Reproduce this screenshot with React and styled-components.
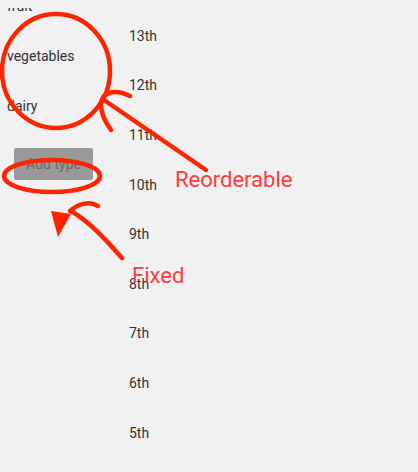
import React from "react";
import styled, { createGlobalStyle } from "styled-components";

const GlobalStyle = createGlobalStyle`
  html, body {
    margin: 0;
    padding: 0;
    background: #f1f1f1;
    overflow: hidden;
  }
  body {
    font-family: Roboto, "Liberation Sans", sans-serif;
  }
`;

const Page = styled.div`
  position: relative;
  width: 418px;
  height: 472px;
  overflow: hidden;
  display: flex;
  flex-direction: row;
  align-items: flex-start;
`;

const TypeViewport = styled.div`
  width: 122px;
  margin-top: 8px;
  overflow: hidden;
`;

const TypeColumn = styled.div`
  display: flex;
  flex-direction: column;
  margin-top: -27px;
`;

const TypeRow = styled.div`
  height: 50px;
  display: flex;
  align-items: center;
  padding-left: 7px;
  font-size: 14px;
  color: #333;
`;

const AddButton = styled.button`
  margin: 17px 0 0 14px;
  width: 79px;
  height: 32px;
  border: none;
  border-radius: 2px;
  background: #999;
  color: #6a6a6a;
  font-family: Roboto, "Liberation Sans", sans-serif;
  font-size: 14px;
  padding: 0;
`;

const DayColumn = styled.div`
  display: flex;
  flex-direction: column;
  margin-top: 11px;
`;

const DayRow = styled.div`
  height: 49.6px;
  display: flex;
  align-items: center;
  padding-left: 7px;
  font-size: 14px;
  color: #333;
`;

const Overlay = styled.svg`
  position: absolute;
  left: 0;
  top: 0;
  pointer-events: none;
`;

const Note = styled.span`
  position: absolute;
  left: ${(p) => p.x}px;
  top: ${(p) => p.y}px;
  font-family: Roboto, "Liberation Sans", sans-serif;
  font-size: 22px;
  color: #ff3d3d;
  line-height: 1;
`;

const types = ["fruit", "vegetables", "dairy"];
const days = ["13th", "12th", "11th", "10th", "9th", "8th", "7th", "6th", "5th"];

const RED = "#ff2400";

export default function App() {
  return (
    <Page>
      <GlobalStyle />
      <TypeViewport>
        <TypeColumn>
          {types.map((t) => (
            <TypeRow key={t}>{t}</TypeRow>
          ))}
          <AddButton>Add type</AddButton>
        </TypeColumn>
      </TypeViewport>
      <DayColumn>
        {days.map((d) => (
          <DayRow key={d}>{d}</DayRow>
        ))}
      </DayColumn>

      <Overlay width="418" height="472" viewBox="0 0 418 472">
        <g fill="none" stroke={RED} strokeWidth="4.5" strokeLinecap="round">
          <ellipse cx="56" cy="71" rx="54" ry="57" />
          <ellipse cx="52" cy="176" rx="48" ry="16" />
          <path d="M206 170 L104 100" />
          <path d="M130 96 C116 89 102 91 101 104 C101 114 105 122 111 130" />
          <path d="M122 258 C106 240 90 222 71 211" />
          <path d="M98 206 C90 201 79 203 70 211" />
        </g>
        <path d="M51 211 L71 214 L58 237 Z" fill={RED} />
      </Overlay>
      <Note x={175} y={169}>Reorderable</Note>
      <Note x={132} y={265}>Fixed</Note>
    </Page>
  );
}
